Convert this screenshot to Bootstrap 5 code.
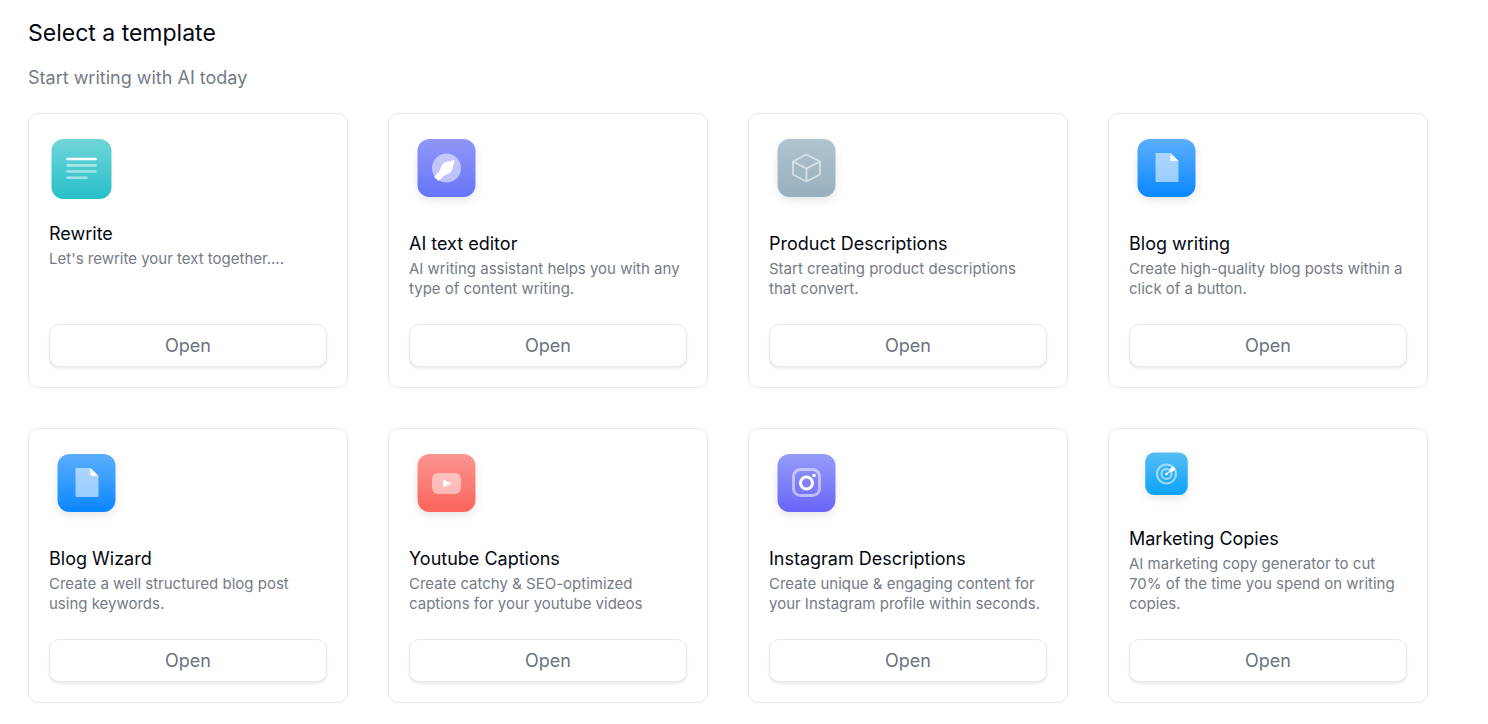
<!DOCTYPE html>
<html lang="en">
<head>
<meta charset="utf-8">
<meta name="viewport" content="width=device-width, initial-scale=1">
<title>Select a template</title>
<link href="https://cdn.jsdelivr.net/npm/bootstrap@5.3.0/dist/css/bootstrap.min.css" rel="stylesheet">
<style>
  body { font-family: Inter, "Liberation Sans", sans-serif; color: #030712; background: #fff; }
  .page { padding: 18px 60px 20px 28px; }
  .page-title { font-size: 23px; line-height: 30px; font-weight: 400; margin-bottom: 16px; }
  .page-lead { font-size: 18px; line-height: 28px; font-weight: 400; color: #757b87; margin-bottom: 21px; }
  .templates { --bs-gutter-x: 40px; --bs-gutter-y: 40px; }
  .template { border: 1px solid #e5e7eb; border-radius: 10px; }
  .template .card-body { padding: 20px; }
  .tile { display: block; margin-bottom: 10px; }
  .template-name { font-size: 18px; line-height: 28px; font-weight: 400; margin-bottom: 1px; }
  .template-text { font-size: 15px; line-height: 20px; font-weight: 400; color: #757b87; margin-bottom: 25px; }
  .btn-open { height: 43px; padding: 0; border: 1px solid #e5e7eb; border-radius: 10px; background: #fff; color: #6b7280; font-size: 18px; line-height: 28px; box-shadow: 0 2px 3px rgba(0,0,0,.08); }
  .btn-open:hover { background: #f9fafb; border-color: #e5e7eb; color: #6b7280; }
</style>
</head>
<body>
<svg width="0" height="0" class="position-absolute" aria-hidden="true">
  <defs>
    <linearGradient id="teal" x2="0" y2="1"><stop offset="0" stop-color="#6fd5d9"/><stop offset="1" stop-color="#27bfc8"/></linearGradient>
    <linearGradient id="violet" x2="0" y2="1"><stop offset="0" stop-color="#8f97f8"/><stop offset="1" stop-color="#6775f8"/></linearGradient>
    <linearGradient id="slate" x2="0" y2="1"><stop offset="0" stop-color="#b0c4ce"/><stop offset="1" stop-color="#97b0be"/></linearGradient>
    <linearGradient id="blue" x2="0" y2="1"><stop offset="0" stop-color="#5caefc"/><stop offset="1" stop-color="#0a87ff"/></linearGradient>
    <linearGradient id="coral" x2="0" y2="1"><stop offset="0" stop-color="#fb958f"/><stop offset="1" stop-color="#fb655c"/></linearGradient>
    <linearGradient id="indigo" x2="0" y2="1"><stop offset="0" stop-color="#959cf8"/><stop offset="1" stop-color="#6a63f8"/></linearGradient>
    <linearGradient id="sky" x2="0" y2="1"><stop offset="0" stop-color="#56bdf3"/><stop offset="1" stop-color="#0ba3f7"/></linearGradient>
    <filter id="lift" x="-30%" y="-30%" width="160%" height="170%"><feDropShadow dx="0" dy="4" stdDeviation="4" flood-color="#000" flood-opacity=".09"/></filter>
    <symbol id="page-icon" viewBox="0 0 76 86">
      <rect x="8.500" y="5" width="58" height="58" rx="12" fill="url(#blue)" filter="url(#lift)"/>
      <path d="M27.500 19h14l8 8v20a1 1 0 0 1-1 1h-21a1 1 0 0 1-1-1V20a1 1 0 0 1 1-1z" fill="#fff" fill-opacity=".55"/>
      <path d="M41.500 19l8 8h-7a1 1 0 0 1-1-1z" fill="#fff"/>
    </symbol>
  </defs>
</svg>
<main class="container-fluid page">
  <h1 class="page-title">Select a template</h1>
  <p class="page-lead">Start writing with AI today</p>
  <div class="row row-cols-1 row-cols-md-2 row-cols-lg-4 templates">
    <div class="col"><article class="card template h-100"><div class="card-body d-flex flex-column">
      <svg class="tile" width="76" height="76" viewBox="0 0 76 76" aria-hidden="true">
        <rect x="2.500" y="5" width="60" height="60" rx="12" fill="url(#teal)"/>
        <g stroke="#fff" stroke-width="2.6" stroke-linecap="round"><path d="M18.500 25h28"/><path d="M18.500 31.400h28M18.500 37.500h28M18.500 43.700h19" stroke-opacity=".5"/></g>
      </svg>
      <h2 class="template-name">Rewrite</h2>
      <p class="template-text">Let's rewrite your text together....</p>
      <button type="button" class="btn btn-open w-100 mt-auto">Open</button>
    </div></article></div>
    <div class="col"><article class="card template h-100"><div class="card-body d-flex flex-column">
      <svg class="tile" width="76" height="86" viewBox="0 0 76 86" aria-hidden="true">
        <rect x="8.500" y="5" width="58" height="58" rx="12" fill="url(#violet)" filter="url(#lift)"/>
        <circle cx="37.500" cy="34" r="14.500" fill="#fff" fill-opacity=".52"/>
        <path d="M45.500 26l-2 9-2 3.500-6.500 3.500-5.500 5-4.500-4 5-5 3-7 2.500-2.500z" fill="#fff"/>
      </svg>
      <h2 class="template-name">AI text editor</h2>
      <p class="template-text">AI writing assistant helps you with any type of content writing.</p>
      <button type="button" class="btn btn-open w-100 mt-auto">Open</button>
    </div></article></div>
    <div class="col"><article class="card template h-100"><div class="card-body d-flex flex-column">
      <svg class="tile" width="76" height="86" viewBox="0 0 76 86" aria-hidden="true">
        <rect x="8.500" y="5" width="58" height="58" rx="12" fill="url(#slate)" filter="url(#lift)"/>
        <path d="M37.500 20.500l13.500 7v13l-13.500 7-13.500-7v-13zM24 27.500l13.500 7 13.500-7M37.500 34.500v13" fill="none" stroke="#fff" stroke-opacity=".55" stroke-width="1.900" stroke-linejoin="round"/>
      </svg>
      <h2 class="template-name">Product Descriptions</h2>
      <p class="template-text">Start creating product descriptions that convert.</p>
      <button type="button" class="btn btn-open w-100 mt-auto">Open</button>
    </div></article></div>
    <div class="col"><article class="card template h-100"><div class="card-body d-flex flex-column">
      <svg class="tile" width="76" height="86" aria-hidden="true"><use href="#page-icon"/></svg>
      <h2 class="template-name">Blog writing</h2>
      <p class="template-text">Create high-quality blog posts within a click of a button.</p>
      <button type="button" class="btn btn-open w-100 mt-auto">Open</button>
    </div></article></div>
    <div class="col"><article class="card template h-100"><div class="card-body d-flex flex-column">
      <svg class="tile" width="76" height="86" aria-hidden="true"><use href="#page-icon"/></svg>
      <h2 class="template-name">Blog Wizard</h2>
      <p class="template-text">Create a well structured blog post using keywords.</p>
      <button type="button" class="btn btn-open w-100 mt-auto">Open</button>
    </div></article></div>
    <div class="col"><article class="card template h-100"><div class="card-body d-flex flex-column">
      <svg class="tile" width="76" height="86" viewBox="0 0 76 86" aria-hidden="true">
        <rect x="8.500" y="5" width="58" height="58" rx="12" fill="url(#coral)" filter="url(#lift)"/>
        <rect x="23" y="24" width="29" height="21" rx="6" fill="#fff" fill-opacity=".5"/>
        <path d="M34.500 31v7l7-3.500z" fill="#fff" stroke="#fff" stroke-linejoin="round"/>
      </svg>
      <h2 class="template-name">Youtube Captions</h2>
      <p class="template-text">Create catchy &amp; SEO-optimized captions for your youtube videos</p>
      <button type="button" class="btn btn-open w-100 mt-auto">Open</button>
    </div></article></div>
    <div class="col"><article class="card template h-100"><div class="card-body d-flex flex-column">
      <svg class="tile" width="76" height="86" viewBox="0 0 76 86" aria-hidden="true">
        <rect x="8.500" y="5" width="58" height="58" rx="12" fill="url(#indigo)" filter="url(#lift)"/>
        <rect x="24.500" y="20.500" width="26" height="26" rx="7" fill="none" stroke="#fff" stroke-opacity=".5" stroke-width="3"/>
        <circle cx="37.500" cy="34" r="6" fill="none" stroke="#fff" stroke-width="3"/>
        <circle cx="45" cy="26.500" r="1.800" fill="#fff"/>
      </svg>
      <h2 class="template-name">Instagram Descriptions</h2>
      <p class="template-text">Create unique &amp; engaging content for your Instagram profile within seconds.</p>
      <button type="button" class="btn btn-open w-100 mt-auto">Open</button>
    </div></article></div>
    <div class="col"><article class="card template h-100"><div class="card-body d-flex flex-column">
      <svg class="tile" width="76" height="66" viewBox="0 0 76 66" aria-hidden="true">
        <rect x="16.200" y="3.500" width="42.600" height="42.600" rx="9" fill="url(#sky)" filter="url(#lift)"/>
        <g fill="none" stroke="#fff" stroke-opacity=".52" stroke-width="2.200"><circle cx="37.500" cy="25" r="9.500"/><circle cx="37.500" cy="25" r="5"/></g>
        <path d="M37.500 25l4.500-3.500" stroke="#fff" stroke-width="1.200"/>
        <circle cx="37.500" cy="25" r="1.300" fill="#fff"/>
        <path d="M40.500 22.300l.5-2.300 3-3 .8 2 2 .7-3.300 3z" fill="#fff"/>
      </svg>
      <h2 class="template-name">Marketing Copies</h2>
      <p class="template-text">AI marketing copy generator to cut 70% of the time you spend on writing copies.</p>
      <button type="button" class="btn btn-open w-100 mt-auto">Open</button>
    </div></article></div>
  </div>
</main>
<script src="https://cdn.jsdelivr.net/npm/bootstrap@5.3.0/dist/js/bootstrap.bundle.min.js"></script>
</body>
</html>
